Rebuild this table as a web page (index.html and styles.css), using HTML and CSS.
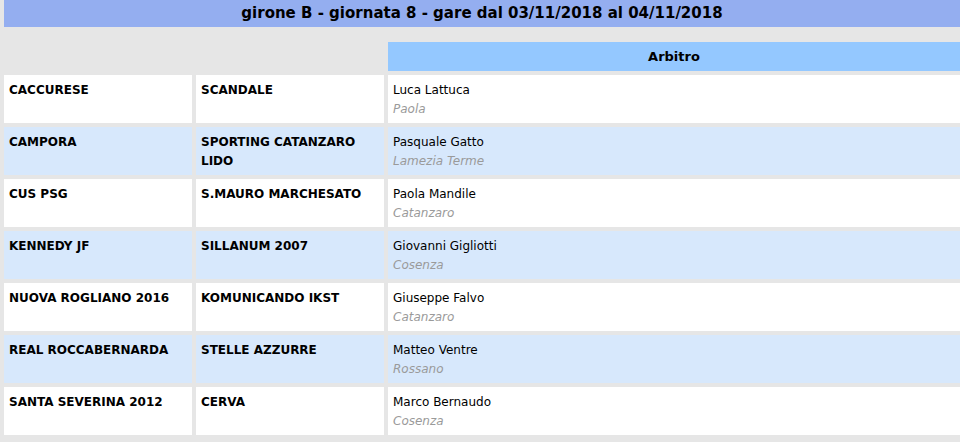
FILE: index.html
```html
<!DOCTYPE html>
<html lang="it">
<head>
<meta charset="utf-8">
<title>girone B - giornata 8</title>
<link rel="stylesheet" href="styles.css">
</head>
<body>
<div class="wrap">
  <div class="title">girone B - giornata 8 - gare dal 03/11/2018 al 04/11/2018</div>
  <div class="grid">
    <div class="blank"></div>
    <div class="blank"></div>
    <div class="th">Arbitro</div>

    <div class="cell team">CACCURESE</div>
    <div class="cell team">SCANDALE</div>
    <div class="cell ref"><span class="name">Luca Lattuca</span><span class="city">Paola</span></div>

    <div class="cell team alt">CAMPORA</div>
    <div class="cell team alt">SPORTING CATANZARO LIDO</div>
    <div class="cell ref alt"><span class="name">Pasquale Gatto</span><span class="city">Lamezia Terme</span></div>

    <div class="cell team">CUS PSG</div>
    <div class="cell team">S.MAURO MARCHESATO</div>
    <div class="cell ref"><span class="name">Paola Mandile</span><span class="city">Catanzaro</span></div>

    <div class="cell team alt">KENNEDY JF</div>
    <div class="cell team alt">SILLANUM 2007</div>
    <div class="cell ref alt"><span class="name">Giovanni Gigliotti</span><span class="city">Cosenza</span></div>

    <div class="cell team">NUOVA ROGLIANO 2016</div>
    <div class="cell team">KOMUNICANDO IKST</div>
    <div class="cell ref"><span class="name">Giuseppe Falvo</span><span class="city">Catanzaro</span></div>

    <div class="cell team alt">REAL ROCCABERNARDA</div>
    <div class="cell team alt">STELLE AZZURRE</div>
    <div class="cell ref alt"><span class="name">Matteo Ventre</span><span class="city">Rossano</span></div>

    <div class="cell team">SANTA SEVERINA 2012</div>
    <div class="cell team">CERVA</div>
    <div class="cell ref"><span class="name">Marco Bernaudo</span><span class="city">Cosenza</span></div>
  </div>
</div>
</body>
</html>
```

FILE: styles.css
```css
html, body {
  margin: 0;
  padding: 0;
  background: #e6e6e6;
  font-family: "DejaVu Sans", Verdana, sans-serif;
  color: #000;
  overflow: hidden;
}

.wrap {
  padding-left: 4px;
}

.title {
  height: 27px;
  line-height: 27px;
  background: #94aef0;
  text-align: center;
  font-weight: bold;
  font-size: 15px;
}

.grid {
  display: grid;
  grid-template-columns: 188px 188px 1fr;
  grid-auto-rows: 48px;
  grid-template-rows: 29px;
  gap: 4px;
  margin-top: 15px;
}

.th {
  background: #94c8ff;
  text-align: center;
  font-weight: bold;
  font-size: 13px;
  line-height: 29px;
}

.cell {
  background: #fff;
  padding: 6px 5px 0;
  font-size: 12px;
  line-height: 19px;
}

.cell.alt {
  background: #d7e8fc;
}

.team {
  font-weight: bold;
}

.ref {
  display: flex;
  flex-direction: column;
}

.city {
  font-style: italic;
  color: #9a9a9a;
}
```
